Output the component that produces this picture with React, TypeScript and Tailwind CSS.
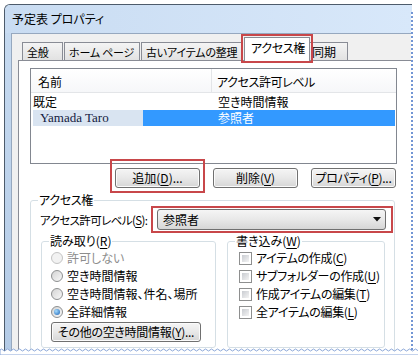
import React from "react";

const tabs = [
	{ label: "全般", w: "w-[41px]" },
	{ label: "ホーム ページ", w: "w-[76px]" },
	{ label: "古いアイテムの整理", w: "w-[102px]" },
];

const readItems = ["許可しない", "空き時間情報", "空き時間情報、件名、場所", "全詳細情報"];
const writeItems = [
	{ label: "アイテムの作成(", key: "C" },
	{ label: "サブフォルダーの作成(", key: "U" },
	{ label: "作成アイテムの編集(", key: "T" },
	{ label: "全アイテムの編集(", key: "L" },
];

function Key({ k }: { k: string }) {
	return <span className="underline underline-offset-[2px]">{k}</span>;
}

function Button({ children, w }: { children: React.ReactNode; w: string }) {
	return (
		<div
			className={`${w} h-[20px] flex items-center justify-center rounded-[3px] border border-[#707070] bg-gradient-to-b from-[#f5f5f5] via-[#e8e8e8] to-[#d6d6d6] shadow-[inset_0_0_0_1px_#fbfbfb]`}>
			{children}
		</div>
	);
}

function Radio({ checked, disabled }: { checked?: boolean; disabled?: boolean }) {
	return (
		<span
			className={`w-[12px] h-[12px] shrink-0 rounded-full border flex items-center justify-center ${
				disabled ? "border-[#c4c4c4] bg-[#f2f2f2]" : "border-[#8d8f90] bg-gradient-to-br from-[#d4d4d4] to-[#f8f8f8]"
			}`}>
			{checked && (
				<span className="w-[6px] h-[6px] rounded-full bg-[radial-gradient(circle_at_35%_35%,#a6dcff,#1a62b5)]" />
			)}
		</span>
	);
}

function Check() {
	return (
		<span className="w-[13px] h-[13px] shrink-0 border border-[#8e8f8f] bg-white p-[2px]">
			<span className="block w-full h-full bg-gradient-to-br from-[#c9ccd1] to-[#f4f4f4]" />
		</span>
	);
}

export default function App(): React.JSX.Element {
	return (
		<div className="relative w-[418px] h-[355px] bg-white overflow-hidden pt-[4px] pl-[4px] text-[12px] leading-[14px] text-black font-['Noto_Sans_CJK_JP','Noto_Sans',sans-serif] [font-feature-settings:'palt']">
			{/* window */}
			<div className="w-[408px] h-[347px] flex flex-col overflow-hidden rounded-tl-[6px] border-l border-t border-[#4d5b6b] bg-gradient-to-b from-[#c7dbf1] to-[#b4cbe6]">
				<div className="h-[28px] shrink-0 flex items-center pl-[7px] bg-gradient-to-r from-[#c9dcf2] to-[#d8e8fa]">
					予定表 プロパティ
				</div>
				<div className="flex-1 ml-[6px] flex flex-col border-l border-t border-[#96a8bf] bg-[#f0f0f0]">
					{/* tabs */}
					<div className="relative h-[26px] shrink-0 flex items-end pl-[10px]">
						{tabs.map((t) => (
							<div
								key={t.label}
								className={`${t.w} h-[18px] mr-[1px] border border-b-0 border-[#898c95] bg-gradient-to-b from-[#f4f4f4] to-[#e2e2e2] pl-[4px] pt-[2px] whitespace-nowrap overflow-hidden text-[11px] tracking-[-0.2px]`}>
								{t.label}
							</div>
						))}
						<div className="relative z-10 -mb-[1px] w-[66px] h-[24px] border border-b-0 border-[#898c95] bg-white pl-[6px] pt-[3px] whitespace-nowrap tracking-[-0.3px]">
							アクセス権
							<div className="absolute -left-[4px] -right-[4px] -top-[4px] -bottom-[2px] border-2 border-[#c8474a]" />
						</div>
						<div className="w-[38px] h-[18px] border border-b-0 border-l-0 border-[#898c95] bg-gradient-to-b from-[#f4f4f4] to-[#e2e2e2] pl-[2px] pt-[2px]">
							同期
						</div>
					</div>
					{/* tab page */}
					<div className="flex-1 ml-[6px] border-l border-t border-[#898c95] bg-white pl-[11px] pt-[7px]">
						<div className="w-[367px] h-[96px] border border-[#828790] bg-white flex flex-col">
							<div className="h-[24px] flex border-b border-[#e3e5e8] bg-gradient-to-b from-white to-[#f6f7f9]">
								<div className="w-[181px] border-r border-[#e3e5e8] pl-[7px] pt-[6px]">名前</div>
								<div className="pl-[5px] pt-[6px] tracking-[-0.4px]">アクセス許可レベル</div>
							</div>
							<div className="h-[17px] flex items-center">
								<div className="w-[181px] pl-[2px]">既定</div>
								<div className="pl-[6px]">空き時間情報</div>
							</div>
							<div className="h-[16px] flex">
								<div className="ml-[2px] w-[110px] bg-[#d9e4f1] pl-[7px] flex items-center font-['Liberation_Serif',serif] text-[13px] text-[#121a40]">
									Yamada Taro
								</div>
								<div className="flex-1 mr-[1px] bg-[#3399ff] text-white pl-[75px] flex items-center">参照者</div>
							</div>
						</div>
						{/* buttons */}
						<div className="w-[366px] mt-[4px] flex justify-end gap-[13px]">
							<div className="relative">
								<Button w="w-[85px]">
									<span>
										追加(<Key k="D" />
										)...
									</span>
								</Button>
								<div className="absolute -left-[5px] -right-[5px] -top-[9px] -bottom-[5px] border-2 border-[#c8474a]" />
							</div>
							<Button w="w-[85px]">
								<span>
									削除(<Key k="V" />)
								</span>
							</Button>
							<Button w="w-[85px]">
								<span className="tracking-[-0.3px]">
									プロパティ(<Key k="P" />
									)...
								</span>
							</Button>
						</div>
						{/* access group */}
						<fieldset className="w-[365px] h-[200px] mt-[5px] border border-[#d5dfe5] rounded-[3px]">
							<legend className="ml-[7px] px-[1px] leading-[14px] tracking-[-0.3px]">アクセス権</legend>
							<div className="flex items-center pl-[9px] mt-[2px]">
								<div className="w-[117px] whitespace-nowrap text-[11.5px] tracking-[-0.6px]">
									アクセス許可レベル(<Key k="S" />
									):
								</div>
								<div className="relative">
									<div className="w-[229px] h-[21px] flex items-center justify-between rounded-[3px] border border-[#707070] bg-gradient-to-b from-[#f5f5f5] via-[#e8e8e8] to-[#d6d6d6] pl-[5px] pr-[4px]">
										<span>参照者</span>
										<svg width="8" height="5" viewBox="0 0 8 5">
											<path d="M0 0H8L4 4.5Z" fill="#111" />
										</svg>
									</div>
									<div className="absolute -left-[6px] -right-[7px] -top-[3px] -bottom-[3px] border-2 border-[#c8474a]" />
								</div>
							</div>
							<div className="flex gap-[11px] pl-[10px] mt-[4px]">
								<fieldset className="w-[175px] h-[114px] border border-[#d5dfe5] rounded-[3px]">
									<legend className="ml-[7px] px-[1px] leading-[14px]">
										読み取り(<Key k="R" />)
									</legend>
									<div className="flex flex-col pl-[9px] pt-[1px]">
										{readItems.map((r, i) => (
											<div key={r} className="h-[18px] flex items-center gap-[4px]">
												<Radio disabled={i === 0} checked={i === 3} />
												<span className={i === 0 ? "text-[#8d8d8d]" : ""}>{r}</span>
											</div>
										))}
										<div className="mt-[1px]">
											<Button w="w-[150px]">
												<span className="tracking-[-0.3px]">
													その他の空き時間情報(<Key k="Y" />
													)...
												</span>
											</Button>
										</div>
									</div>
								</fieldset>
								<fieldset className="w-[158px] h-[114px] border border-[#d5dfe5] rounded-[3px]">
									<legend className="ml-[7px] px-[1px] leading-[14px]">
										書き込み(<Key k="W" />)
									</legend>
									<div className="flex flex-col pl-[11px] pt-[1px]">
										{writeItems.map((w) => (
											<div key={w.key} className="h-[18px] flex items-center gap-[4px] tracking-[-0.3px]">
												<Check />
												<span>
													{w.label}
													<Key k={w.key} />)
												</span>
											</div>
										))}
									</div>
								</fieldset>
							</div>
						</fieldset>
					</div>
				</div>
			</div>
			{/* torn right edge */}
			<div className="absolute top-[12px] bottom-[5px] left-[411px] w-[7px] bg-white border-l-2 border-dotted border-[#7396d4]" />
			{/* torn bottom edge */}
			<svg className="absolute left-0 bottom-0" width="418" height="8" viewBox="0 0 418 8">
				<path
					d={`M0 3 ${Array.from({ length: 70 }, (_, i) => `Q${i * 6 + 1.5} 1 ${i * 6 + 3} 3 Q${i * 6 + 4.5} 5 ${i * 6 + 6} 3`).join(" ")} V8 H0 Z`}
					fill="white"
					stroke="#8ba7d8"
					strokeWidth="1"
				/>
			</svg>
		</div>
	);
}
